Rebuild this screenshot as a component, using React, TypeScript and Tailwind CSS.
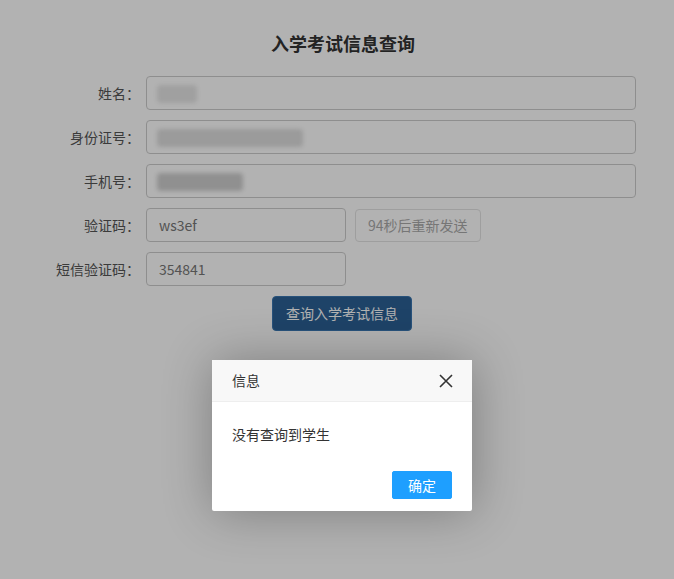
import React from 'react';

const font = { fontFamily: '"Noto Sans CJK SC", "Liberation Sans", sans-serif' };

type RowProps = {
  label: string;
  children: React.ReactNode;
};

function FormRow({ label, children }: RowProps) {
  return (
    <div className="flex items-center h-[34px] mb-[10px]">
      <label className="w-[92px] text-right text-[14px] text-[#555] whitespace-nowrap">
        {label}：
      </label>
      <div className="flex-1 flex items-center gap-[9px] pl-[6px] h-full">{children}</div>
    </div>
  );
}

function Masked({ w, tone }: { w: number; tone: string }) {
  return (
    <div className="relative h-[34px] flex-1 rounded-[4px] border border-[#ccc] bg-white overflow-hidden">
      <div
        className={`absolute left-[10px] top-[8px] h-[18px] rounded-[4px] blur-[2px] ${tone}`}
        style={{ width: w }}
      />
    </div>
  );
}

export default function App() {
  return (
    <div className="relative w-[674px] h-[579px] bg-white overflow-hidden" style={font}>
      <div className="ml-[48px] w-[588px] pt-[31px]">
        <h2 className="text-center text-[18px] font-bold text-[#333] leading-[24px] ml-[2px] mb-[21px]">
          入学考试信息查询
        </h2>
        <FormRow label="姓名">
          <Masked w={40} tone="bg-[#e6e6e6]" />
        </FormRow>
        <FormRow label="身份证号">
          <Masked w={146} tone="bg-[#dedede]" />
        </FormRow>
        <FormRow label="手机号">
          <Masked w={86} tone="bg-[#cfcfcf]" />
        </FormRow>
        <FormRow label="验证码">
          <input
            readOnly
            value="ws3ef"
            className="w-[200px] h-[34px] rounded-[4px] border border-[#ccc] px-[12px] text-[14px] text-[#777] outline-none"
          />
          <button className="h-[33px] px-[12px] rounded-[4px] border border-[#e3e3e3] bg-white text-[14px] text-[#aaa]">
            94秒后重新发送
          </button>
        </FormRow>
        <FormRow label="短信验证码">
          <input
            readOnly
            value="354841"
            className="w-[200px] h-[34px] rounded-[4px] border border-[#ccc] px-[12px] text-[14px] text-[#777] outline-none"
          />
        </FormRow>
        <div className="flex justify-center">
          <button className="h-[35px] px-[13px] rounded-[4px] border border-[#3a76b0] bg-[#2b6195] text-[14px] text-white">
            查询入学考试信息
          </button>
        </div>
      </div>

      {/* layer shade */}
      <div className="absolute inset-0 bg-black/30" />

      {/* dialog */}
      <div className="absolute left-[212px] top-[360px] w-[260px] bg-white rounded-[2px] shadow-[1px_1px_50px_rgba(0,0,0,0.3)]">
        <div className="flex items-center justify-between h-[42px] pl-[20px] pr-[18px] bg-[#f8f8f8] border-b border-[#eee] text-[14px] text-[#333]">
          <span>信息</span>
          <svg width="14" height="14" viewBox="0 0 14 14" className="mr-[1px]">
            <path d="M1 1 L13 13 M13 1 L1 13" stroke="#333" strokeWidth="1.6" />
          </svg>
        </div>
        <div className="p-[20px] text-[14px] leading-[24px] text-[#333]">没有查询到学生</div>
        <div className="flex justify-end px-[15px] pb-[12px]">
          <button className="h-[28px] mx-[5px] mt-[5px] px-[15px] rounded-[2px] border border-[#1e9fff] bg-[#1e9fff] text-[14px] text-white leading-[26px]">
            确定
          </button>
        </div>
      </div>
    </div>
  );
}
